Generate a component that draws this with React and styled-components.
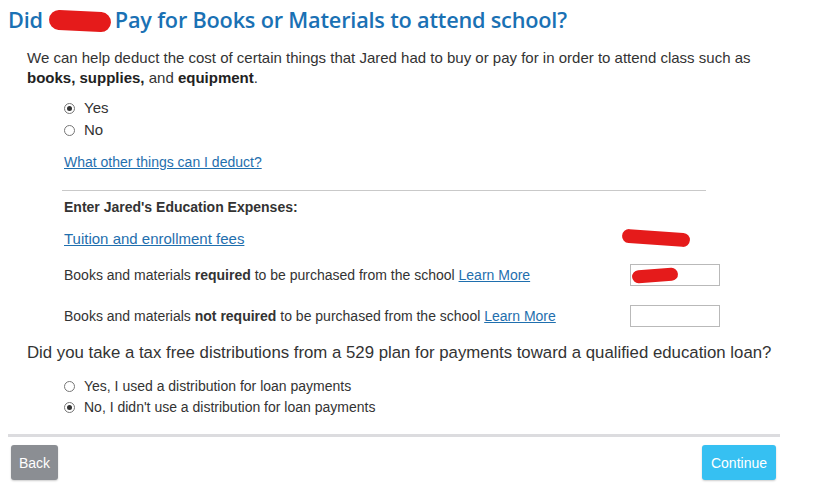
import styled, { createGlobalStyle } from 'styled-components'

const Global = createGlobalStyle`
body {
  margin: 0;
  background: #fff;
  font-family: "Liberation Sans", Arial, sans-serif;
  color: #333;
}
`

const Page = styled.div`
width: 816px;
height: 492px;
padding: 0 0 0 8px;
box-sizing: border-box;
overflow: hidden;
`

const Title = styled.h1`
margin: 0;
padding-top: 4px;
height: 31px;
font-family: "Open Sans", "Noto Sans", sans-serif;
font-weight: 600;
font-size: 21.7px;
letter-spacing: -0.2px;
color: #1a71b4;
display: flex;
align-items: center;
`

const Blob = styled.span`
display: inline-block;
width: ${(p) => p.w}px;
height: ${(p) => p.h}px;
background: #e51b1b;
border-radius: ${(p) => p.h / 2}px;
transform: rotate(${(p) => p.rot || 0}deg);
margin: ${(p) => p.m || '0'};
`

const Body = styled.div`
padding-left: 19px;
`

const Intro = styled.p`
margin: 13px 0 0;
font-size: 15px;
line-height: 20px;
color: #333;
& b { color: #222; }
`

const RadioGroup = styled.div`
display: flex;
flex-direction: column;
gap: ${(p) => p.gap || 4}px;
margin: ${(p) => p.m};
padding-left: 37px;
`

const RadioRow = styled.label`
display: flex;
align-items: center;
gap: 9px;
font-size: ${(p) => p.size || 15}px;
line-height: 18px;
color: #333;
`

const Dot = styled.span`
width: 11px;
height: 11px;
border: 1px solid #767676;
border-radius: 50%;
box-sizing: border-box;
display: flex;
align-items: center;
justify-content: center;
background: #fff;
&::after {
  content: '';
  width: 5px;
  height: 5px;
  border-radius: 50%;
  background: ${(p) => (p.on ? '#333' : 'transparent')};
}
`

const Link = styled.a`
color: #1f6fae;
text-decoration: underline;
font-size: ${(p) => p.size || 14}px;
cursor: pointer;
`

const Section = styled.div`
padding-left: 37px;
width: 644px;
`

const LinkLine = styled.div`
margin-top: 14px;
line-height: 18px;
`

const Divider = styled.hr`
margin: 19px 0 0 -2px;
border: none;
border-top: 1px solid #c9c9c9;
width: 644px;
`

const SubHead = styled.div`
margin-top: 7px;
font-size: 14px;
font-weight: bold;
color: #333;
line-height: 18px;
`

const ExpenseRow = styled.div`
display: flex;
align-items: center;
justify-content: space-between;
height: ${(p) => p.h}px;
margin-top: ${(p) => p.mt}px;
font-size: 14px;
color: #333;
width: 656px;
`

const AmountBox = styled.div`
width: 90px;
height: 22px;
border: 1px solid #b9b9b9;
box-sizing: border-box;
display: flex;
align-items: center;
background: #fff;
`

const Question = styled.p`
margin: 17px 0 0;
font-size: 16.8px;
line-height: 18px;
color: #333;
`

const Footer = styled.div`
margin-top: 18px;
border-top: 3px solid #dcdcdf;
width: 772px;
padding: 8px 4px 0 3px;
display: flex;
justify-content: space-between;
box-sizing: border-box;
`

const Button = styled.button`
height: 35px;
padding: 0 ${(p) => p.px}px;
border: none;
border-radius: 3px;
background: ${(p) => p.bg};
color: #fff;
font-family: "Liberation Sans", Arial, sans-serif;
font-size: 14px;
box-shadow: 0 1px 2px rgba(0,0,0,0.2);
cursor: pointer;
`

export default function App() {
  return (
    <Page>
      <Global />
      <Title>
        Did<Blob w={62} h={20} rot={3} m="2px 4px 0 6px" />Pay for Books or Materials to attend school?
      </Title>
      <Body>
        <Intro>
          We can help deduct the cost of certain things that Jared had to buy or pay for in order to attend class such as
          <br />
          <b>books, supplies,</b> and <b>equipment</b>.
        </Intro>
        <RadioGroup gap={4} m="11px 0 0">
          <RadioRow><Dot on />Yes</RadioRow>
          <RadioRow><Dot />No</RadioRow>
        </RadioGroup>
        <Section>
          <LinkLine><Link>What other things can I deduct?</Link></LinkLine>
          <Divider />
          <SubHead>Enter Jared's Education Expenses:</SubHead>
          <ExpenseRow h={22} mt={11}>
            <Link size={15}>Tuition and enrollment fees</Link>
            <Blob w={68} h={14} rot={4} m="0 30px 0 0" />
          </ExpenseRow>
          <ExpenseRow h={22} mt={15}>
            <span>Books and materials <b>required</b> to be purchased from the school <Link>Learn More</Link></span>
            <AmountBox><Blob w={46} h={13} rot={-4} m="0 0 0 1px" /></AmountBox>
          </ExpenseRow>
          <ExpenseRow h={22} mt={19}>
            <span>Books and materials <b>not required</b> to be purchased from the school <Link>Learn More</Link></span>
            <AmountBox />
          </ExpenseRow>
        </Section>
        <Question>Did you take a tax free distributions from a 529 plan for payments toward a qualified education loan?</Question>
        <RadioGroup gap={3} m="15px 0 0">
          <RadioRow size={14}><Dot />Yes, I used a distribution for loan payments</RadioRow>
          <RadioRow size={14}><Dot on />No, I didn't use a distribution for loan payments</RadioRow>
        </RadioGroup>
      </Body>
      <Footer>
        <Button bg="#8b8e93" px={8}>Back</Button>
        <Button bg="#36c0f2" px={9}>Continue</Button>
      </Footer>
    </Page>
  )
}
